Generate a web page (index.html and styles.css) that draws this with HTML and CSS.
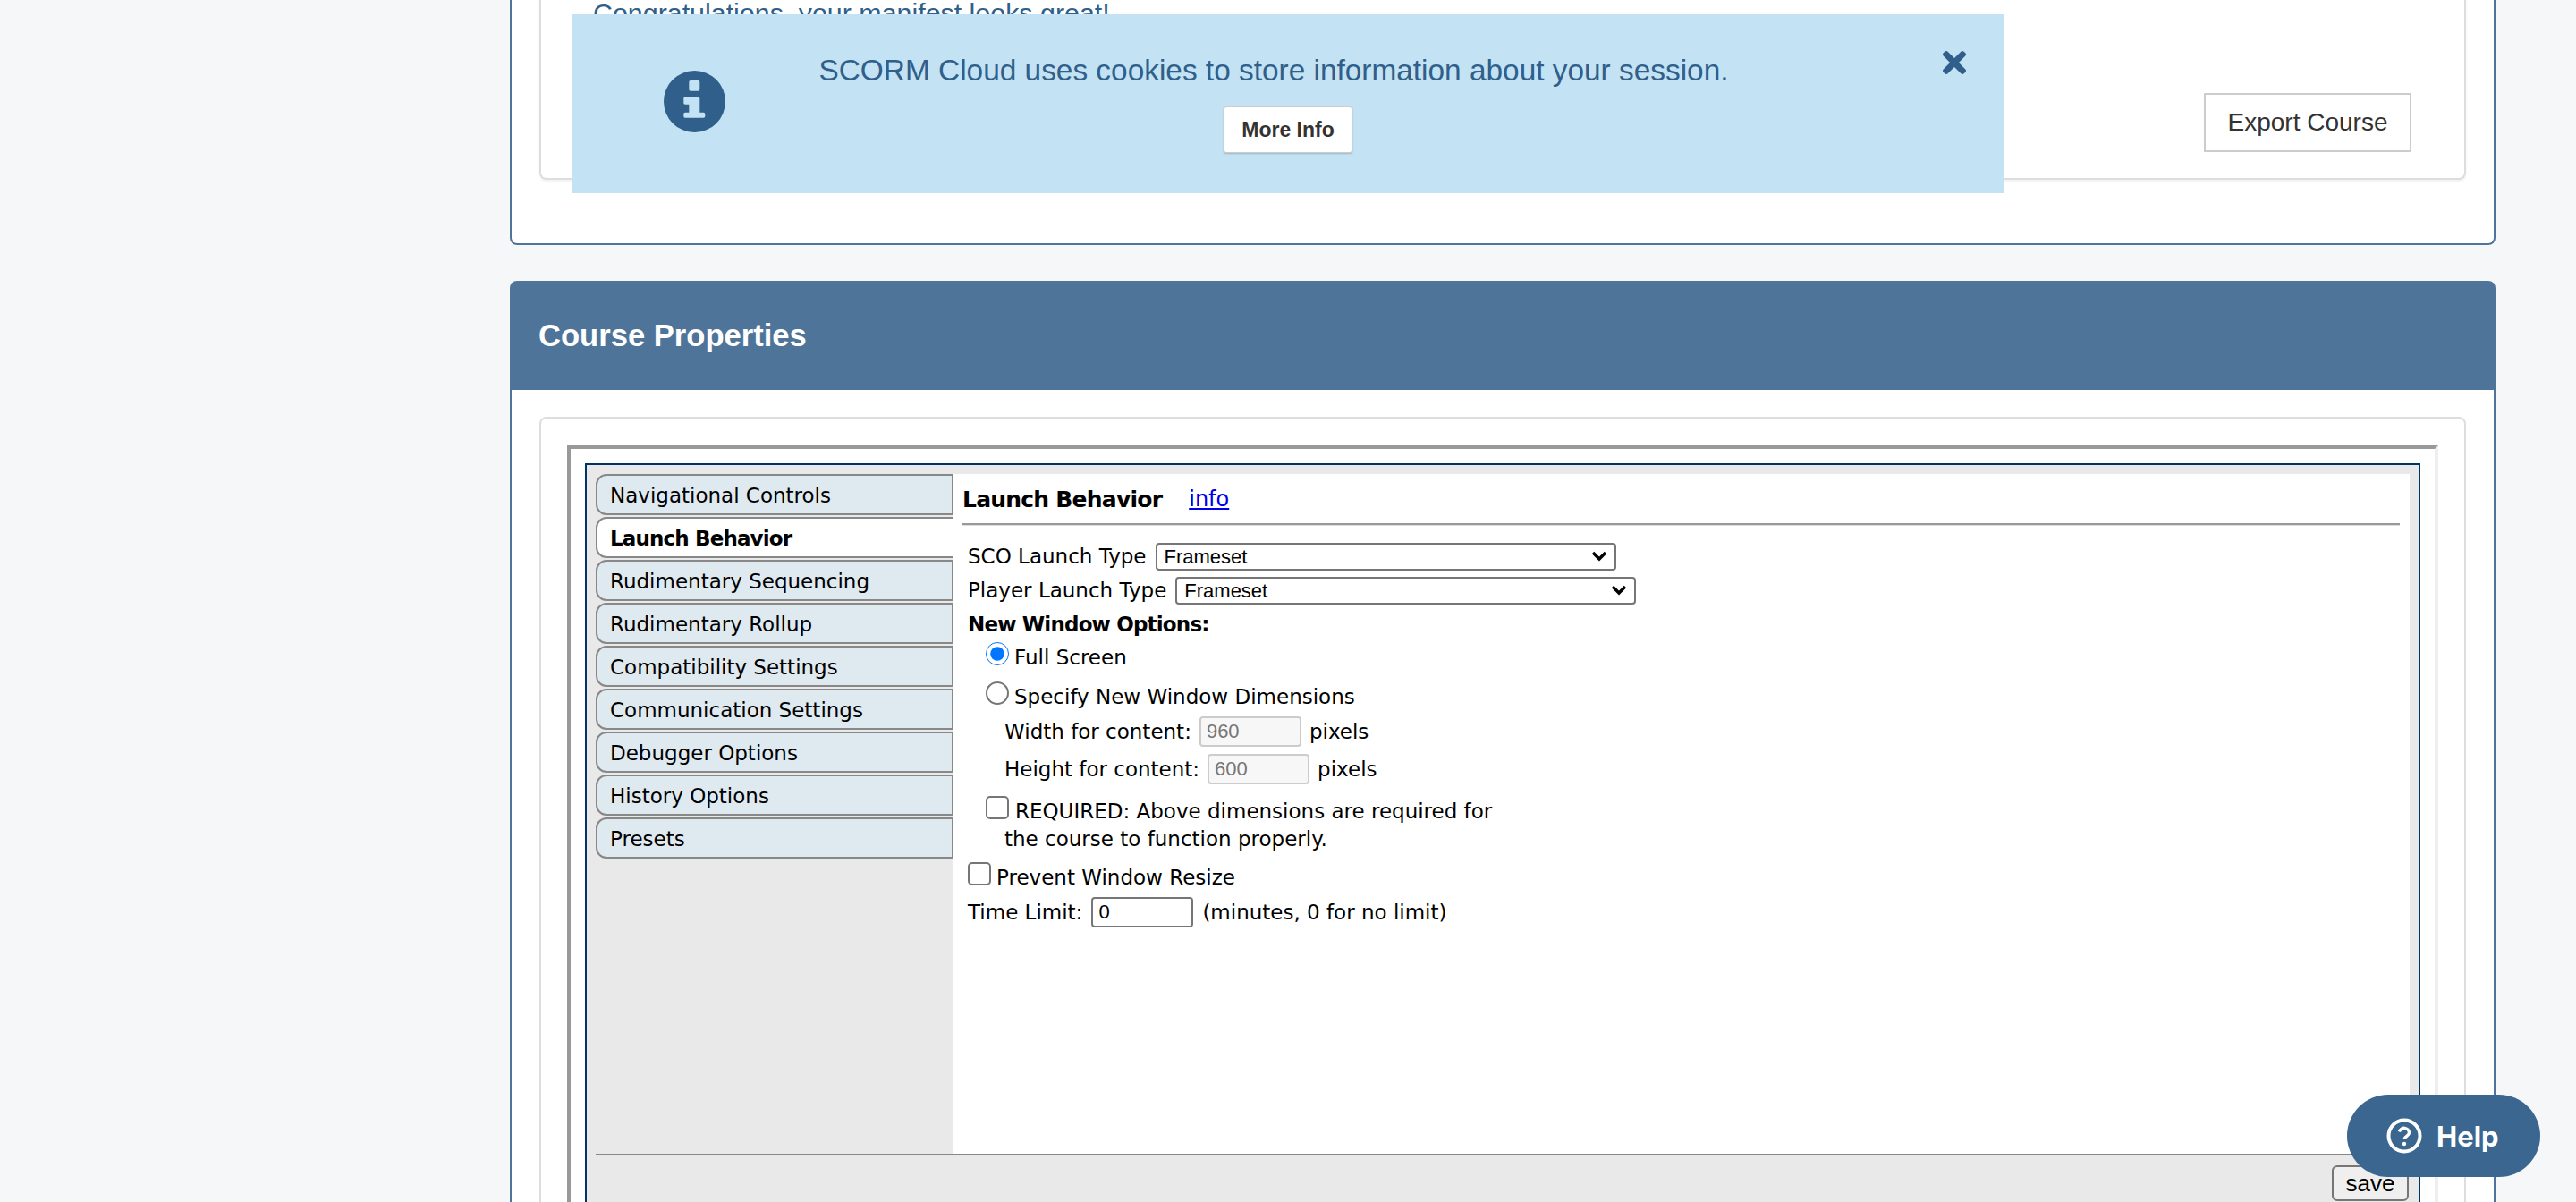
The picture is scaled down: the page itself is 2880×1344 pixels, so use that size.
FILE: index.html
```html
<!DOCTYPE html>
<html lang="en">
<head>
    <meta charset="UTF-8">
    <title>SCORM Cloud - Course Properties</title>
    <link rel="stylesheet" href="styles.css">
</head>
<body>
    <div class="page">
        <section class="panel panel-top">
            <div class="card card-result">
                <p class="result-text">Congratulations, your manifest looks great!</p>
                <div class="result-actions">
                    <button type="button" class="export-button">Export Course</button>
                </div>
            </div>
        </section>

        <section class="panel panel-props">
            <h2 class="panel-header">Course Properties</h2>
            <div class="panel-body">
                <div class="card card-props">
                    <div class="frame">
                        <div class="editor">
                            <div class="editor-main">
                                <ul class="tabs">
                                    <li class="tab">Navigational Controls</li>
                                    <li class="tab tab-active">Launch Behavior</li>
                                    <li class="tab">Rudimentary Sequencing</li>
                                    <li class="tab">Rudimentary Rollup</li>
                                    <li class="tab">Compatibility Settings</li>
                                    <li class="tab">Communication Settings</li>
                                    <li class="tab">Debugger Options</li>
                                    <li class="tab">History Options</li>
                                    <li class="tab">Presets</li>
                                </ul>
                                <div class="content">
                                    <div class="content-title">
                                        <h3>Launch Behavior</h3>
                                        <a href="#">info</a>
                                    </div>
                                    <form class="options">
                                        <div class="row row-select">
                                            <label for="sco_type">SCO Launch Type</label>
                                            <select id="sco_type" class="type-select"><option>Frameset</option></select>
                                        </div>
                                        <div class="row row-select">
                                            <label for="player_type">Player Launch Type</label>
                                            <select id="player_type" class="type-select"><option>Frameset</option></select>
                                        </div>
                                        <div class="row row-heading"><strong>New Window Options:</strong></div>
                                        <div class="row row-check indent-radio">
                                            <input type="radio" name="window" id="full" checked>
                                            <label for="full">Full Screen</label>
                                        </div>
                                        <div class="row row-check indent-radio">
                                            <input type="radio" name="window" id="specify">
                                            <label for="specify">Specify New Window Dimensions</label>
                                        </div>
                                        <div class="row row-size indent-size">
                                            <label for="win_w">Width for content:</label>
                                            <input type="text" id="win_w" class="size-input" value="960" disabled>
                                            <span>pixels</span>
                                        </div>
                                        <div class="row row-size indent-size">
                                            <label for="win_h">Height for content:</label>
                                            <input type="text" id="win_h" class="size-input" value="600" disabled>
                                            <span>pixels</span>
                                        </div>
                                        <div class="row row-required indent-radio">
                                            <input type="checkbox" id="required">
                                            <label for="required">REQUIRED: Above dimensions are required for</label>
                                        </div>
                                        <div class="required-more indent-size">the course to function properly.</div>
                                        <div class="row row-prevent">
                                            <input type="checkbox" id="prevent">
                                            <label for="prevent">Prevent Window Resize</label>
                                        </div>
                                        <div class="row row-size row-limit">
                                            <label for="limit">Time Limit:</label>
                                            <input type="text" id="limit" class="limit-input" value="0">
                                            <span>(minutes, 0 for no limit)</span>
                                        </div>
                                    </form>
                                </div>
                            </div>
                            <div class="editor-footer">
                                <button type="button" class="save-button">save</button>
                            </div>
                        </div>
                    </div>
                </div>
            </div>
        </section>
    </div>

    <!-- cookie notice -->
    <div class="cookie-banner">
        <svg class="cookie-icon" viewBox="0 0 69 69"><path fill="#2f5f8a" fill-rule="evenodd" d="M34.5 0a34.5 34.5 0 1 0 0 69a34.5 34.5 0 1 0 0-69zM30 11h8.6a1.7 1.7 0 0 1 1.7 1.7v8.3a1.7 1.7 0 0 1-1.7 1.7H30a1.7 1.7 0 0 1-1.7-1.7v-8.3a1.7 1.7 0 0 1 1.7-1.7zM24 29.3h14.6a1.7 1.7 0 0 1 1.7 1.7v15.7h4.3a1.7 1.7 0 0 1 1.7 1.7v2.6a1.7 1.7 0 0 1-1.7 1.7H24a1.7 1.7 0 0 1-1.7-1.7v-2.6a1.7 1.7 0 0 1 1.7-1.7h4.3v-9h-4.3a1.7 1.7 0 0 1-1.7-1.7v-5a1.7 1.7 0 0 1 1.7-1.7z"/></svg>
        <div class="cookie-message">
            <p>SCORM Cloud uses cookies to store information about your session.</p>
            <button type="button" class="more-button">More Info</button>
        </div>
        <svg class="cookie-close" viewBox="0 80 352 352"><path fill="#2f5f8a" d="M242.72 256l100.07-100.07c12.28-12.28 12.28-32.19 0-44.48l-22.24-22.24c-12.28-12.28-32.19-12.28-44.48 0L176 189.28 75.93 89.21c-12.28-12.28-32.19-12.28-44.48 0L9.21 111.45c-12.28 12.28-12.28 32.19 0 44.48L109.28 256 9.21 356.07c-12.28 12.28-12.28 32.19 0 44.48l22.24 22.24c12.28 12.28 32.2 12.28 44.48 0L176 322.72l100.07 100.07c12.28 12.28 32.2 12.28 44.48 0l22.24-22.24c12.28-12.28 12.28-32.19 0-44.48L242.72 256z"/></svg>
    </div>

    <!-- help widget -->
    <button type="button" class="help-button">
        <svg class="help-icon" viewBox="0 0 40 40">
            <circle cx="20" cy="20" r="17.5" fill="none" stroke="#fff" stroke-width="4"/>
            <path d="M14.5 15.5a5.6 5.6 0 0 1 11 1c0 3.6-5.4 4-5.4 7.4" fill="none" stroke="#fff" stroke-width="3.4"/>
            <circle cx="20" cy="29" r="2.2" fill="#fff"/>
        </svg>
        Help
    </button>
</body>
</html>
```

FILE: styles.css
```css
/* Reset */
* {
    margin: 0;
    padding: 0;
    box-sizing: border-box;
}

html,
body {
    height: 100vh;
    overflow: hidden;
}

body {
    position: relative;
    font-family: "Liberation Sans", Arial, sans-serif;
    background-color: #f5f7f9;
    color: #000;
}

.page {
    width: 2220px;
    margin: -100px 0 0 570px;
}

/* Panels */
.panel {
    background-color: #fff;
    border-radius: 8px;
}

.panel-top {
    height: 374px;
    padding: 0 31px;
    border: 2px solid #4e7499;
    border-top: none;
}

.panel-props {
    margin-top: 40px;
}

.panel-header {
    height: 122px;
    padding: 0 32px;
    line-height: 122px;
    font-size: 34.6px;
    font-weight: bold;
    color: #fff;
    background-color: #4e7499;
    border-radius: 8px 8px 0 0;
}

.panel-body {
    padding: 30px 31px 0;
    border: 2px solid #4e7499;
    border-top: none;
}

.card {
    background-color: #fff;
    border: 2px solid #ddd;
    border-radius: 8px;
}

.card-result {
    height: 301px;
    padding: 97px 59px 0 58px;
    border-top: none;
    box-shadow: 0 2px 3px rgba(0, 0, 0, 0.06);
}

.result-text {
    font-size: 30.4px;
    line-height: 34px;
    color: #2f5f8a;
}

.result-actions {
    display: flex;
    justify-content: flex-end;
    margin-top: 73px;
}

.export-button {
    width: 232px;
    height: 66px;
    font-family: inherit;
    font-size: 28px;
    color: #333;
    background-color: #fff;
    border: 2px solid #ccc;
}

.card-props {
    padding: 30px 29px 0;
}

/* Editor frame */
.frame {
    padding: 16px;
    border: 4px solid;
    border-color: #999 #eee #eee #999;
}

.editor {
    padding: 10px;
    background-color: #e9e9e9;
    border: 2px solid #003366;
}

.editor-main {
    display: flex;
    height: 760px;
}

.tabs {
    width: 400px;
    flex-shrink: 0;
    list-style: none;
}

.tab {
    height: 46px;
    margin-bottom: 2px;
    padding-left: 14px;
    line-height: 44px;
    font-family: "DejaVu Sans", sans-serif;
    font-size: 23px;
    background-color: #dfe9f0;
    border: 2px solid #888;
    border-radius: 12px 0 0 12px;
}

.tab-active {
    font-weight: bold;
    letter-spacing: -0.85px;
    background-color: #fff;
    border-right: none;
}

.content {
    flex: 1;
    padding: 10px 11px 0 10px;
    font-family: "DejaVu Sans", sans-serif;
    font-size: 23px;
    background-color: #fff;
}

.content-title {
    display: flex;
    align-items: center;
    gap: 30px;
    height: 47px;
    padding-bottom: 9px;
    border-bottom: 2px solid #999;
    box-shadow: 0 1px 0 #ddd;
}

.content-title h3 {
    font-size: 25px;
    letter-spacing: -0.77px;
}

.content-title a {
    font-size: 24px;
    color: #0000ee;
}

.options {
    padding: 16px 0 0 6px;
}

.row {
    display: flex;
    align-items: center;
    white-space: nowrap;
}

.row-select {
    height: 38px;
    gap: 10px;
}

.row-heading {
    height: 34px;
    padding-top: 3px;
    letter-spacing: -0.82px;
}

.type-select {
    width: 515px;
    height: 31px;
    padding-left: 8px;
    font-family: "Liberation Sans", Arial, sans-serif;
    font-size: 22px;
    background: #fff url("data:image/svg+xml,%3Csvg xmlns='http://www.w3.org/2000/svg' width='18' height='12'%3E%3Cpath d='M2 2l7 7 7-7' fill='none' stroke='%23000' stroke-width='3.4'/%3E%3C/svg%3E") no-repeat right 8px center;
    border: 2px solid #767676;
    border-radius: 4px;
    appearance: none;
}

.row-check {
    height: 44px;
    gap: 6px;
}

.row-check input,
.row-required input,
.row-prevent input {
    width: 26px;
    height: 26px;
    margin: -8px 0 0;
    flex-shrink: 0;
}

/* unchecked boxes keep the heavier outline of the original */
.row input[type="checkbox"],
.row input[type="radio"]:not(:checked) {
    appearance: none;
    background-color: #fff;
    border: 2px solid #767676;
    border-radius: 5px;
}

.row input[type="radio"]:not(:checked) {
    border-radius: 50%;
}

.indent-radio {
    padding-left: 20px;
}

.indent-size {
    padding-left: 41px;
}

.row-size {
    height: 34px;
    gap: 9px;
}

.row-size + .row-size {
    margin-top: 8px;
}

.row-limit {
    margin-top: 5px;
    gap: 10px;
}

.size-input,
.limit-input {
    width: 114px;
    height: 34px;
    padding-left: 6px;
    font-family: "Liberation Sans", Arial, sans-serif;
    font-size: 22px;
    border-radius: 4px;
}

.size-input {
    color: #767676;
    background-color: #f7f7f7;
    border: 2px solid #ccc;
}

.limit-input {
    color: #000;
    border: 2px solid #767676;
}

.row-required {
    height: 34px;
    margin-top: 13px;
    gap: 7px;
}

.required-more {
    height: 29px;
    line-height: 29px;
}

.row-prevent {
    height: 34px;
    margin-top: 11px;
    gap: 6px;
}

.editor-footer {
    display: flex;
    justify-content: flex-end;
    height: 80px;
    padding-top: 11px;
    background-color: #e9e9e9;
    border-top: 2px solid #888;
}

.save-button {
    width: 86px;
    height: 40px;
    margin-right: 1px;
    font-family: "Liberation Sans", Arial, sans-serif;
    font-size: 26px;
    background-color: #efefef;
    border: 2px solid #767676;
    border-radius: 6px;
}

/* Cookie notice sits over the page */
.cookie-banner {
    position: absolute;
    left: 640px;
    top: 16px;
    display: flex;
    width: 1600px;
    height: 200px;
    color: #2f5f8a;
    background-color: #c3e2f3;
}

.cookie-icon {
    width: 69px;
    height: 69px;
    margin: 63px 0 0 102px;
    flex-shrink: 0;
}

.cookie-message {
    width: 1120px;
    margin-left: 69px;
    padding-top: 44px;
    text-align: center;
}

.cookie-message p {
    padding-right: 32px;
    font-size: 33.4px;
    line-height: 38px;
}

.more-button {
    width: 144px;
    height: 52px;
    margin-top: 21px;
    font-family: inherit;
    font-size: 23px;
    font-weight: bold;
    color: #333;
    background-color: #fff;
    border: 1px solid #ccc;
    border-radius: 3px;
    box-shadow: 0 1px 2px rgba(0, 0, 0, 0.2);
}

.cookie-close {
    width: 26px;
    height: 26px;
    margin: 41px 0 0 172px;
}

/* Help widget */
.help-button {
    position: absolute;
    left: 2624px;
    top: 1224px;
    display: flex;
    align-items: center;
    gap: 16px;
    width: 216px;
    height: 92px;
    padding-left: 44px;
    font-family: Inter, sans-serif;
    font-size: 31px;
    font-weight: 700;
    color: #fff;
    background-color: #3a668f;
    border: none;
    border-radius: 46px;
}

.help-icon {
    width: 40px;
    height: 40px;
}
```
